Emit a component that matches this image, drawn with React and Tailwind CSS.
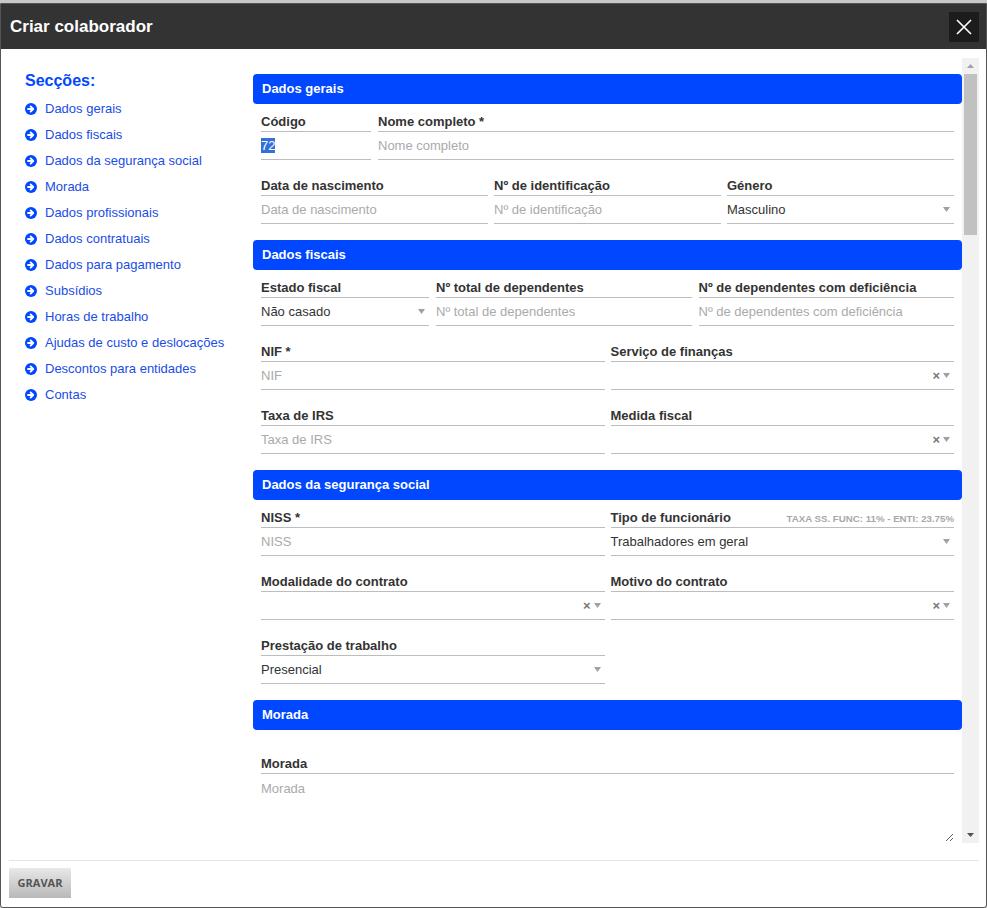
import React from 'react';

const sections = [
  'Dados gerais',
  'Dados fiscais',
  'Dados da segurança social',
  'Morada',
  'Dados profissionais',
  'Dados contratuais',
  'Dados para pagamento',
  'Subsídios',
  'Horas de trabalho',
  'Ajudas de custo e deslocações',
  'Descontos para entidades',
  'Contas',
];

function ArrowCircle() {
  return (
    <svg width="12" height="12" viewBox="0 0 12 12" className="shrink-0">
      <circle cx="6" cy="6" r="6" fill="#0047ff" />
      <path d="M3 6h5M5.6 3.4L8.2 6 5.6 8.6" stroke="#fff" strokeWidth="1.9" fill="none" strokeLinecap="round" strokeLinejoin="round" />
    </svg>
  );
}

function Caret() {
  return (
    <svg width="7" height="5" viewBox="0 0 7 5" className="shrink-0">
      <path d="M0 0h7L3.5 5z" fill="#a0a0a0" />
    </svg>
  );
}

function SectionHeader({ title }) {
  return (
    <div className="flex h-[30px] items-center rounded-[4px] bg-[#0047ff] pl-[9px] text-[13px] font-bold text-white">
      {title}
    </div>
  );
}

function Field({ label, placeholder, value, select, clear, extra, selected }) {
  return (
    <div className="min-w-0">
      <div className="flex items-end justify-between border-b border-[#bdbdbd] pt-[1px] pb-[1px] leading-[17px]">
        <span className="text-[13px] font-bold text-[#333]">{label}</span>
        {extra}
      </div>
      <div className="flex h-[28px] items-center justify-between border-b border-[#bdbdbd] pr-[4px] text-[13px]">
        {selected ? (
          <span className="bg-[#3470d8] leading-[15px] text-white">{value}</span>
        ) : value ? (
          <span className="text-[#333]">{value}</span>
        ) : (
          <span className="text-[#aaa]">{placeholder}</span>
        )}
        {(select || clear) && (
          <span className="flex items-center gap-[3px]">
            {clear && <span className="text-[13px] font-bold leading-none text-[#777]">×</span>}
            <Caret />
          </span>
        )}
      </div>
    </div>
  );
}

export default function App() {
  return (
    <div className="min-h-screen bg-[#c8c8c8] pt-[3px]" style={{ fontFamily: '"Liberation Sans", Arial, sans-serif' }}>
      <div className="flex h-[905px] flex-col overflow-hidden rounded-b-[3px] border border-[#555] bg-white">
        {/* header */}
        <div className="flex h-[45px] shrink-0 items-center justify-between bg-[#333] pl-[9px] pr-[7px]">
          <span className="text-[17px] font-bold text-white">Criar colaborador</span>
          <button className="flex h-[30px] w-[30px] items-center justify-center bg-[#1c1c1c]">
            <svg width="16" height="16" viewBox="0 0 16 16">
              <path d="M1 1l14 14M15 1L1 15" stroke="#fff" strokeWidth="1.6" />
            </svg>
          </button>
        </div>

        {/* body */}
        <div className="flex flex-1 flex-col pl-2 pr-[7px] pt-[9px]">
          <div className="flex h-[785px]">
            {/* sidebar */}
            <div className="w-[244px] shrink-0 pl-4 pt-[13px]">
              <div className="text-[16px] font-bold leading-[20px] text-[#0047ff]">Secções:</div>
              <ul className="mt-[5px]">
                {sections.map((s) => (
                  <li key={s} className="flex h-[26px] items-center gap-2 text-[13px] text-[#1a4de6]">
                    <ArrowCircle />
                    <span>{s}</span>
                  </li>
                ))}
              </ul>
            </div>

            {/* scroll area */}
            <div className="flex min-w-0 flex-1">
              <div className="min-w-0 flex-1 overflow-hidden pt-4">
                <SectionHeader title="Dados gerais" />
                <div className="px-2 pt-[8px]">
                  <div className="mb-4 grid grid-cols-[110px_1fr] gap-[7px]">
                    <Field label="Código" value="72" selected />
                    <Field label="Nome completo *" placeholder="Nome completo" />
                  </div>
                  <div className="mb-4 grid grid-cols-3 gap-[6px]">
                    <Field label="Data de nascimento" placeholder="Data de nascimento" />
                    <Field label="Nº de identificação" placeholder="Nº de identificação" />
                    <Field label="Género" value="Masculino" select />
                  </div>
                </div>

                <SectionHeader title="Dados fiscais" />
                <div className="px-2 pt-[8px]">
                  <div className="mb-4 grid grid-cols-[168px_1fr_1fr] gap-[7px]">
                    <Field label="Estado fiscal" value="Não casado" select />
                    <Field label="Nº total de dependentes" placeholder="Nº total de dependentes" />
                    <Field label="Nº de dependentes com deficiência" placeholder="Nº de dependentes com deficiência" />
                  </div>
                  <div className="mb-4 grid grid-cols-2 gap-[6px]">
                    <Field label="NIF *" placeholder="NIF" />
                    <Field label="Serviço de finanças" clear select />
                  </div>
                  <div className="mb-4 grid grid-cols-2 gap-[6px]">
                    <Field label="Taxa de IRS" placeholder="Taxa de IRS" />
                    <Field label="Medida fiscal" clear select />
                  </div>
                </div>

                <SectionHeader title="Dados da segurança social" />
                <div className="px-2 pt-[8px]">
                  <div className="mb-4 grid grid-cols-2 gap-[6px]">
                    <Field label="NISS *" placeholder="NISS" />
                    <Field
                      label="Tipo de funcionário"
                      value="Trabalhadores em geral"
                      select
                      extra={<span className="pb-[1px] text-[9.7px] font-bold leading-[12px] text-[#a8a8a8]">TAXA SS. FUNC: 11% - ENTI: 23.75%</span>}
                    />
                  </div>
                  <div className="mb-4 grid grid-cols-2 gap-[6px]">
                    <Field label="Modalidade do contrato" clear select />
                    <Field label="Motivo do contrato" clear select />
                  </div>
                  <div className="mb-4 grid grid-cols-2 gap-[6px]">
                    <Field label="Prestação de trabalho" value="Presencial" select />
                  </div>
                </div>

                <SectionHeader title="Morada" />
                <div className="px-2 pt-[24px]">
                  <div className="border-b border-[#bdbdbd] pt-[1px] pb-[1px] text-[13px] font-bold leading-[17px] text-[#333]">Morada</div>
                  <textarea
                    placeholder="Morada"
                    className="block h-[68px] w-full resize-y border-0 pt-[7px] text-[13px] leading-[16px] text-[#333] outline-none placeholder:text-[#aaa]"
                  />
                </div>
              </div>

              {/* scrollbar */}
              <div className="flex w-[17px] shrink-0 flex-col bg-[#f1f1f1]">
                <div className="flex h-[16px] items-center justify-center">
                  <svg width="7" height="4" viewBox="0 0 7 4"><path d="M0 4h7L3.5 0z" fill="#a3a3a3" /></svg>
                </div>
                <div className="mx-[2px] h-[161px] bg-[#c1c1c1]" />
                <div className="flex-1" />
                <div className="flex h-[17px] items-center justify-center">
                  <svg width="7" height="4" viewBox="0 0 7 4"><path d="M0 0h7L3.5 4z" fill="#505050" /></svg>
                </div>
              </div>
            </div>
          </div>

          {/* footer */}
          <div className="mt-[17px] border-t border-[#e5e5e5] pt-[7px]">
            <button
              className="h-[30px] w-[62px] bg-gradient-to-b from-[#e8e8e8] to-[#b9b9b9] text-[11px] font-bold text-[#555]"
              style={{ fontFamily: '"Open Sans", sans-serif' }}
            >
              GRAVAR
            </button>
          </div>
        </div>
      </div>
    </div>
  );
}
